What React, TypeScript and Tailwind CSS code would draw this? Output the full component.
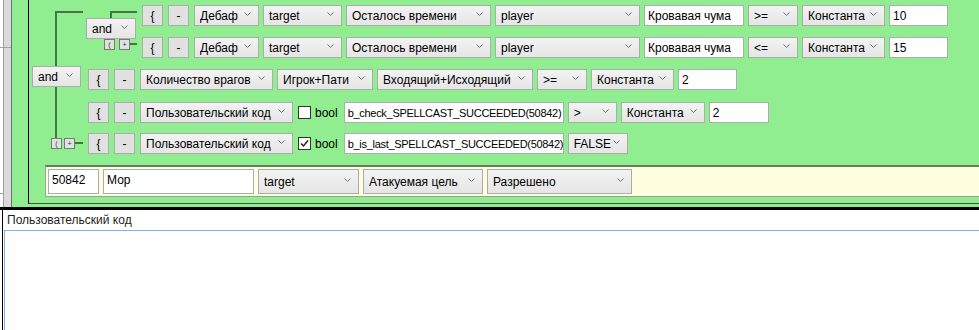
import React from "react";

function Chevron() {
  return (
    <svg width="7" height="4" viewBox="0 0 7 4" className="shrink-0">
      <polyline points="0.5,0.5 3.5,3.5 6.5,0.5" fill="none" stroke="#707070" strokeWidth="1" />
    </svg>
  );
}

function Combo({ text, className = "" }: { text: string; className?: string }) {
  return (
    <div
      className={`flex shrink-0 items-center justify-between border border-[#acacac] bg-gradient-to-b from-[#f3f3f3] to-[#e5e5e5] pl-[5px] pr-[7px] text-[12px] leading-[16px] text-black ${className}`}
    >
      <span className="truncate whitespace-pre">{text}</span>
      <span className="mb-[3px]">
        <Chevron />
      </span>
    </div>
  );
}

function TextBox({ text, className = "" }: { text: string; className?: string }) {
  return (
    <div
      className={`shrink-0 overflow-hidden border border-[#abadb3] bg-white pl-[3px] pt-[2px] leading-[16px] text-black whitespace-pre ${className}`}
    >
      {text}
    </div>
  );
}

function Btn({ label }: { label: string }) {
  return (
    <div className="flex h-[21px] w-[21px] shrink-0 items-center justify-center border border-[#adadad] bg-[#e1e1e1] text-[12px] leading-none text-black">
      {label}
    </div>
  );
}

function Tiny({ label }: { label: string }) {
  return (
    <div className="flex h-[11px] w-[11px] items-center justify-center border border-[#7a7a7a] bg-[#e1e1e1] text-[7px] leading-none text-[#333]">
      {label}
    </div>
  );
}

function CheckBox({ checked }: { checked?: boolean }) {
  return (
    <div className="flex h-[13px] w-[13px] shrink-0 items-center justify-center border border-[#333] bg-white">
      {checked && (
        <svg width="9" height="9" viewBox="0 0 9 9">
          <polyline points="1,4.5 3.5,7 8,1.5" fill="none" stroke="#222" strokeWidth="1.5" />
        </svg>
      )}
    </div>
  );
}

// строка условия: кнопки "{" и "-", затем поля
function Row({ children, className = "" }: { children: React.ReactNode; className?: string }) {
  return (
    <div className={`flex h-[21px] gap-[5px] ${className}`}>
      <Btn label="{" />
      <Btn label="-" />
      <div className="flex gap-[4px]">{children}</div>
    </div>
  );
}

export default function App() {
  return (
    <div className="flex h-[330px] w-[979px] flex-col overflow-hidden bg-white font-['Liberation_Sans',Arial,sans-serif]">
      {/* верхняя часть */}
      <div className="flex h-[207px] shrink-0">
        {/* левая полоска */}
        <div className="flex w-[12px] shrink-0">
          <div className="flex w-[3px] flex-col bg-white">
            <div className="h-[47px]" />
            <div className="h-px bg-[#a0a0a0]" />
            <div className="h-[145px]" />
            <div className="h-px bg-[#a0a0a0]" />
          </div>
          <div className="w-px bg-[#a0a0a0]" />
          <div className="flex w-[7px] flex-col bg-[#dadada]">
            <div className="h-[47px]" />
            <div className="h-px bg-[#a0a0a0]" />
          </div>
          <div className="w-px bg-[#6e6e6e]" />
        </div>

        <div className="flex flex-1 bg-[#90ee90] pl-[16px]">
          {/* внутренняя панель */}
          <div className="flex h-[204px] w-full flex-col border-b border-l border-b-[#4a4a4a] border-l-black">
            <div className="flex pt-[5px]">
              {/* внешняя группа and */}
              <div className="relative flex w-[59px] shrink-0 flex-col">
                <div className="absolute left-[26px] top-[6px] h-[2px] w-[28px] bg-[#467546]" />
                <div className="absolute left-[26px] top-[6px] h-[55px] w-[2px] bg-[#467546]" />
                <div className="absolute left-[26px] top-[82px] h-[51px] w-[2px] bg-[#467546]" />
                <div className="absolute left-[46px] top-[137px] h-[2px] w-[8px] bg-[#467546]" />
                <Combo text="and" className="ml-[3px] mt-[61px] h-[21px] w-[49px]" />
                <div className="ml-[22px] mt-[51px] flex gap-[2px]">
                  <Tiny label="(" />
                  <Tiny label="+" />
                </div>
              </div>

              <div className="flex flex-col">
                {/* вложенная группа */}
                <div className="flex">
                  <div className="relative flex w-[54px] shrink-0 flex-col">
                    <div className="absolute left-[22px] top-[6px] h-[2px] w-[27px] bg-[#467546]" />
                    <div className="absolute left-[22px] top-[6px] h-[7px] w-[2px] bg-[#467546]" />
                    <div className="absolute left-[42px] top-[38px] h-[2px] w-[7px] bg-[#467546]" />
                    <Combo text="and" className="-ml-[2px] mt-[13px] h-[21px] w-[50px]" />
                    <div className="ml-[16px] flex gap-[4px]">
                      <Tiny label="(" />
                      <Tiny label="+" />
                    </div>
                  </div>
                  <div className="flex flex-col gap-[11px]">
                    <Row>
                      <Combo text="Дебаф" className="w-[65px]" />
                      <Combo text="target" className="w-[79px]" />
                      <Combo text="Осталось времени" className="w-[145px]" />
                      <Combo text="player" className="w-[145px]" />
                      <TextBox text="Кровавая чума" className="w-[100px] text-[12px]" />
                      <Combo text=">=" className="w-[50px]" />
                      <Combo text="Константа" className="w-[83px]" />
                      <TextBox text="10" className="w-[59px] text-[12px]" />
                    </Row>
                    <Row>
                      <Combo text="Дебаф" className="w-[65px]" />
                      <Combo text="target" className="w-[79px]" />
                      <Combo text="Осталось времени" className="w-[145px]" />
                      <Combo text="player" className="w-[145px]" />
                      <TextBox text="Кровавая чума" className="w-[100px] text-[12px]" />
                      <Combo text="<=" className="w-[50px]" />
                      <Combo text="Константа" className="w-[83px]" />
                      <TextBox text="15" className="w-[59px] text-[12px]" />
                    </Row>
                  </div>
                </div>

                <Row className="mt-[11px]">
                  <Combo text="Количество врагов" className="w-[133px]" />
                  <Combo text="Игрок+Пати" className="w-[96px]" />
                  <Combo text="Входящий+Исходящий" className="w-[156px]" />
                  <Combo text=">=" className="w-[50px]" />
                  <Combo text="Константа" className="w-[83px]" />
                  <TextBox text="2" className="w-[59px] text-[12px]" />
                </Row>

                <Row className="mt-[12px]">
                  <Combo text="Пользовательский код" className="w-[153px]" />
                  <div className="ml-[1px] flex items-center gap-[4px]">
                    <CheckBox />
                    <span className="mr-[2px] text-[12px] leading-[16px] text-black">bool</span>
                  </div>
                  <TextBox
                    text="b_check_SPELLCAST_SUCCEEDED(50842)"
                    className="w-[220px] text-[11px] tracking-[-0.3px]"
                  />
                  <Combo text=">" className="w-[49px]" />
                  <Combo text="Константа" className="w-[84px]" />
                  <TextBox text="2" className="w-[60px] text-[12px]" />
                </Row>

                <Row className="mt-[10px]">
                  <Combo text="Пользовательский код" className="w-[153px]" />
                  <div className="ml-[1px] flex items-center gap-[4px]">
                    <CheckBox checked />
                    <span className="mr-[2px] text-[12px] leading-[16px] text-black">bool</span>
                  </div>
                  <TextBox
                    text="b_is_last_SPELLCAST_SUCCEEDED(50842)"
                    className="w-[220px] text-[11px] tracking-[-0.3px]"
                  />
                  <Combo text="FALSE" className="w-[60px]" />
                </Row>
              </div>
            </div>

            {/* жёлтая строка */}
            <div className="ml-[16px] mt-[11px] flex h-[32px] gap-[4px] border-b border-l border-t-2 border-b-[#8fa58f] border-l-[#9aa89a] border-t-[#5f7f5f] bg-[#ffffe0] pl-[2px] pt-[2px]">
              <TextBox text="50842" className="h-[25px] w-[51px] text-[12px]" />
              <TextBox text="Мор" className="h-[25px] w-[151px] text-[12px]" />
              <Combo text="target" className="h-[25px] w-[101px]" />
              <Combo text="Атакуемая цель" className="h-[25px] w-[120px]" />
              <Combo text="Разрешено" className="h-[25px] w-[145px]" />
            </div>
          </div>
        </div>
      </div>

      <div className="h-[3px] shrink-0 bg-black" />

      {/* нижняя часть */}
      <div className="flex flex-1 pl-[2px]">
        <div className="flex flex-1 flex-col border-l border-black">
          <div className="h-[20px] pl-[4px] pt-[2px] text-[12px] leading-[16px] text-[#1e1e1e]">
            Пользовательский код
          </div>
          <div className="ml-[1px] h-[120px] w-[990px] border border-[#7eb4ea] bg-white" />
        </div>
      </div>
    </div>
  );
}
